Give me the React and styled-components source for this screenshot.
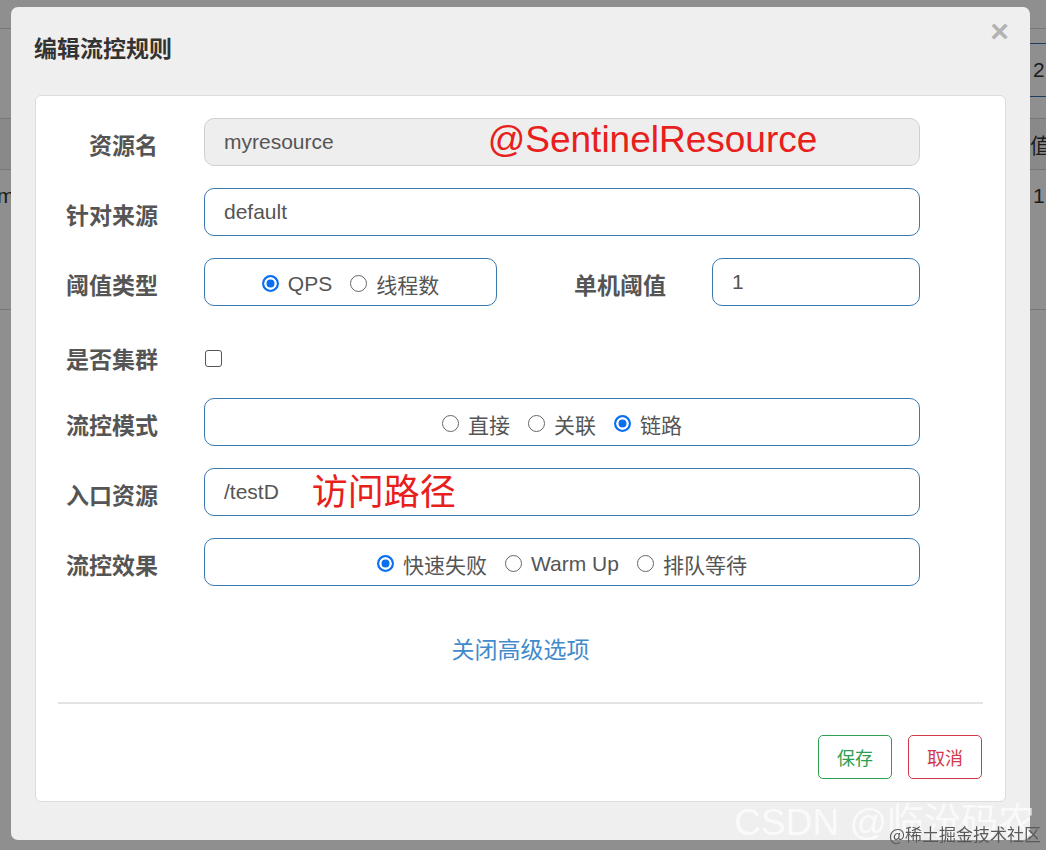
import React from 'react'
import styled, { createGlobalStyle } from 'styled-components'

const GlobalStyle = createGlobalStyle`
  html, body {
    margin: 0;
    padding: 0;
  }
  body {
    width: 1046px;
    height: 850px;
    overflow: hidden;
    background: #fff;
    font-family: "Liberation Sans", "Noto Sans CJK SC", sans-serif;
  }
  * { box-sizing: border-box; }
`

/* ---- page behind the dialog ---- */
const Page = styled.div`
  height: 850px;
  color: #333;
  font-size: 21px;
`
const TopBar = styled.div`
  height: 29px;
  border-bottom: 1px solid #d4d4d4;
`
const Toolbar = styled.div`
  height: 89px;
  display: flex;
  justify-content: flex-end;
  padding-top: 14px;
`
const SearchBox = styled.div`
  width: 16px;
  height: 54px;
  border: 1px solid #2f6fa8;
  border-left: none;
  border-right: none;
  display: flex;
  align-items: center;
  padding-left: 3px;
  white-space: nowrap;
  overflow: hidden;
`
const BgRow = styled.div`
  display: grid;
  grid-template-columns: 1fr 15px;
  align-items: center;
  height: ${p => p.$h}px;
  background: ${p => p.$bg || 'transparent'};
  border-top: ${p => (p.$top ? '1px solid #d4d4d4' : 'none')};
  border-bottom: 1px solid #d4d4d4;
  white-space: nowrap;
  overflow: hidden;
`
const BgCell = styled.div`
  margin-left: ${p => p.$shift || 0}px;
  align-self: ${p => p.$align || 'center'};
  padding-top: ${p => p.$pt || 0}px;
`

/* ---- dialog ---- */
const Backdrop = styled.div`
  position: fixed;
  inset: 0;
  background: rgba(0, 0, 0, 0.44);
  padding: 7px 0 0 11px;
`
const Modal = styled.div`
  width: 1019px;
  height: 833px;
  background: #efefef;
  border-radius: 7px;
  padding: 0 24px;
  display: flex;
  flex-direction: column;
`
const Header = styled.div`
  height: 88px;
  display: flex;
  justify-content: space-between;
  align-items: flex-start;
`
const Title = styled.h4`
  margin: 25px 0 0 -1px;
  font-family: "Noto Sans CJK SC", sans-serif;
  font-size: 23px;
  line-height: 30px;
  font-weight: 700;
  color: #333;
`
const Close = styled.span`
  margin: 9px -3px 0 0;
  font-family: "Liberation Sans", sans-serif;
  font-size: 32px;
  line-height: 30px;
  font-weight: 700;
  color: #b3b3b3;
`
const Panel = styled.div`
  height: 707px;
  background: #fff;
  border: 1px solid #dcdcdc;
  border-radius: 6px;
  padding-top: 22px;
  display: flex;
  flex-direction: column;
`
const Form = styled.div`
  display: flex;
  flex-direction: column;
  gap: 22px;
  padding-right: 85px;
`
const Row = styled.div`
  display: flex;
  align-items: center;
  height: 48px;
  padding-top: ${p => p.$pt || 0}px;
`
const Label = styled.label`
  flex: ${p => (p.$grow ? '1' : '0 0 122px')};
  margin-right: 46px;
  margin-top: 4px;
  text-align: right;
  font-family: "Noto Sans CJK SC", sans-serif;
  font-size: 23px;
  font-weight: 700;
  color: #555;
  line-height: 1;
  white-space: nowrap;
`
const Field = styled.div`
  position: relative;
  height: 48px;
  flex: ${p => (p.$w ? `0 0 ${p.$w}px` : '1')};
  display: flex;
  align-items: center;
  justify-content: ${p => (p.$center ? 'center' : 'flex-start')};
  gap: 18px;
  padding: 0 19px;
  border: 1px solid ${p => (p.$disabled ? '#cfcfcf' : '#3a78b0')};
  background: ${p => (p.$disabled ? '#eee' : '#fff')};
  border-radius: 10px;
  font-size: 21px;
  color: #555;
  white-space: nowrap;
`
const Note = styled.span`
  margin-left: ${p => p.$gap}px;
  margin-top: ${p => p.$dy || 0}px;
  font-family: ${p => (p.$cjk ? '"Noto Sans CJK SC", sans-serif' : '"Liberation Sans", sans-serif')};
  font-size: ${p => p.$size}px;
  color: #e8201c;
  line-height: 1;
`
const Option = styled.label`
  display: flex;
  align-items: center;
  gap: 9px;
  padding-top: 3px;
  font-family: "Liberation Sans", "Noto Sans CJK SC", sans-serif;
  font-size: 21px;
  color: #555;
`
const RadioDot = styled.input`
  appearance: none;
  width: 17px;
  height: 17px;
  margin: 0;
  border-radius: 50%;
  border: 1.5px solid #666;
  background: #fff;
  &:checked {
    border: 2px solid #0b6ff2;
    background: #0b6ff2;
    box-shadow: inset 0 0 0 2.5px #fff;
  }
`
const Check = styled.input`
  appearance: none;
  width: 17px;
  height: 17px;
  margin: 4px 0 0 1px;
  border: 1.5px solid #555;
  border-radius: 3px;
  background: #fff;
`
const Toggle = styled.a`
  margin-top: 47px;
  align-self: center;
  font-family: "Noto Sans CJK SC", sans-serif;
  font-size: 23px;
  line-height: 30px;
  color: #428bca;
  text-decoration: none;
`
const Divider = styled.hr`
  margin: 39px 22px 0;
  border: none;
  border-top: 2px solid #e3e3e3;
`
const Footer = styled.div`
  display: flex;
  justify-content: flex-end;
  gap: 16px;
  margin-top: 31px;
  padding-right: 23px;
`
const Button = styled.button`
  width: 74px;
  height: 44px;
  border: 1px solid ${p => p.$color};
  color: ${p => p.$color};
  background: #fff;
  border-radius: 5px;
  font-family: "Noto Sans CJK SC", sans-serif;
  font-size: 18px;
  padding: 0;
`
const Watermark = styled.div`
  position: absolute;
  right: 10px;
  bottom: 5px;
  display: flex;
  flex-direction: column;
  align-items: flex-end;
  pointer-events: none;
`
const MarkBig = styled.span`
  font-family: "Liberation Sans", "Noto Sans CJK SC", sans-serif;
  font-size: 37px;
  line-height: 40px;
  color: rgba(255, 255, 255, 0.7);
  margin-right: 1px;
  margin-bottom: -20px;
`
const MarkSmall = styled.span`
  font-family: "Noto Sans CJK SC", sans-serif;
  font-size: 17px;
  line-height: 22px;
  color: #5a5a5a;
  margin-right: -5px;
`

const Radio = ({ name, label, checked }) => (
  <Option>
    <RadioDot type="radio" name={name} defaultChecked={checked} />
    {label}
  </Option>
)

const App = () => {
  return (
    <>
      <GlobalStyle />
      <Page>
        <TopBar />
        <Toolbar>
          <SearchBox>2.</SearchBox>
        </Toolbar>
        <BgRow $h={52} $bg="#f4f4f4" $top>
          <BgCell />
          <BgCell $shift={-1}>值</BgCell>
        </BgRow>
        <BgRow $h={140}>
          <BgCell $shift={-3} $align="start" $pt={14}>my</BgCell>
          <BgCell $shift={2} $align="start" $pt={14}>1</BgCell>
        </BgRow>
      </Page>

      <Backdrop>
        <Modal>
          <Header>
            <Title>编辑流控规则</Title>
            <Close>×</Close>
          </Header>
          <Panel>
            <Form>
              <Row>
                <Label>资源名</Label>
                <Field $disabled>
                  myresource
                  <Note $gap={136} $size={37} $dy={-6}>@SentinelResource</Note>
                </Field>
              </Row>
              <Row>
                <Label>针对来源</Label>
                <Field>default</Field>
              </Row>
              <Row>
                <Label>阈值类型</Label>
                <Field $w={293} $center>
                  <Radio name="grade" label="QPS" checked />
                  <Radio name="grade" label="线程数" />
                </Field>
                <Label $grow>单机阈值</Label>
                <Field $w={208}>1</Field>
              </Row>
              <Row $pt={8}>
                <Label>是否集群</Label>
                <Check type="checkbox" />
              </Row>
              <Row>
                <Label>流控模式</Label>
                <Field $center>
                  <Radio name="strategy" label="直接" />
                  <Radio name="strategy" label="关联" />
                  <Radio name="strategy" label="链路" checked />
                </Field>
              </Row>
              <Row>
                <Label>入口资源</Label>
                <Field>
                  /testD
                  <Note $gap={15} $size={36} $dy={-6} $cjk>访问路径</Note>
                </Field>
              </Row>
              <Row>
                <Label>流控效果</Label>
                <Field $center>
                  <Radio name="behavior" label="快速失败" checked />
                  <Radio name="behavior" label="Warm Up" />
                  <Radio name="behavior" label="排队等待" />
                </Field>
              </Row>
            </Form>
            <Toggle href="#">关闭高级选项</Toggle>
            <Divider />
            <Footer>
              <Button $color="#2e9e4f">保存</Button>
              <Button $color="#d23a4c">取消</Button>
            </Footer>
          </Panel>
        </Modal>
        <Watermark>
          <MarkBig>CSDN @临汾码农</MarkBig>
          <MarkSmall>@稀土掘金技术社区</MarkSmall>
        </Watermark>
      </Backdrop>
    </>
  )
}

export default App
